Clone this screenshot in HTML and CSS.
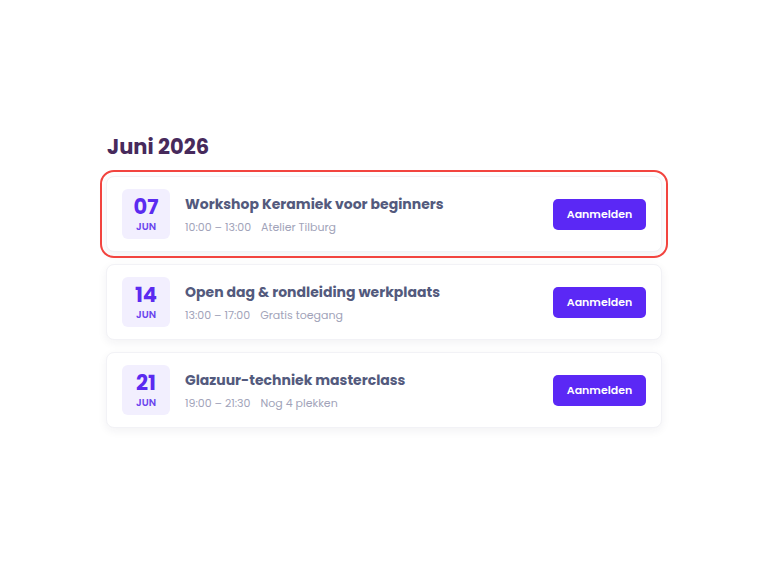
FILE: index.html
```html
<!DOCTYPE html>
<html lang="nl">
<head>
  <meta charset="UTF-8" />
  <meta name="viewport" content="width=device-width, initial-scale=1.0" />
  <title>Agenda juni 2026</title>
  <link rel="stylesheet" href="styles.css">
</head>
<body>

  <div class="agenda">
    <h2 class="month">Juni 2026</h2>

    <div class="event active">
      <div class="date">
        <span class="day">07</span>
        <span class="mon">JUN</span>
      </div>
      <div class="info">
        <div class="title">Workshop Keramiek voor beginners</div>
        <div class="meta"><span>10:00 – 13:00</span><span>Atelier Tilburg</span></div>
      </div>
      <button class="signup">Aanmelden</button>
    </div>

    <div class="event">
      <div class="date">
        <span class="day">14</span>
        <span class="mon">JUN</span>
      </div>
      <div class="info">
        <div class="title">Open dag &amp; rondleiding werkplaats</div>
        <div class="meta"><span>13:00 – 17:00</span><span>Gratis toegang</span></div>
      </div>
      <button class="signup">Aanmelden</button>
    </div>

    <div class="event">
      <div class="date">
        <span class="day">21</span>
        <span class="mon">JUN</span>
      </div>
      <div class="info">
        <div class="title">Glazuur-techniek masterclass</div>
        <div class="meta"><span>19:00 – 21:30</span><span>Nog 4 plekken</span></div>
      </div>
      <button class="signup">Aanmelden</button>
    </div>
  </div>

</body>
</html>
```

FILE: styles.css
```css
body {
  margin: 0;
  background-color: #ffffff;
  font-family: Poppins, Inter, "Noto Sans", sans-serif;
}

.agenda {
  width: 556px;
  margin: 0 auto;
  padding-top: 131px;
}

.month {
  margin: 0 0 13px 1px;
  font-size: 21px;
  line-height: 32px;
  font-weight: 700;
  color: #472a5c;
}

.event {
  display: flex;
  align-items: center;
  gap: 15px;
  padding: 12px 15px 12px 15px;
  margin-bottom: 12px;
  background-color: #ffffff;
  border: 1px solid #f2f2f6;
  border-radius: 8px;
  box-shadow: 0 3px 10px rgba(30, 30, 70, 0.06);
}

.event.active {
  outline: 2px solid #f2443f;
  outline-offset: 4px;
}

.date {
  width: 48px;
  height: 50px;
  flex-shrink: 0;
  display: flex;
  flex-direction: column;
  align-items: center;
  justify-content: center;
  background-color: #f2effe;
  border-radius: 6px;
  color: #5b2bf0;
}

.day {
  font-size: 21px;
  font-weight: 700;
  line-height: 21px;
}

.mon {
  margin-top: 4px;
  font-size: 10px;
  font-weight: 600;
  line-height: 11px;
  color: #6a45ee;
}

.info {
  flex: 1;
}

.title {
  font-size: 14px;
  font-weight: 700;
  line-height: 20px;
  color: #535a7d;
}

.meta {
  margin-top: 5px;
  display: flex;
  gap: 10px;
  font-size: 11px;
  line-height: 16px;
  color: #a1a3b9;
}

.signup {
  width: 93px;
  height: 31px;
  border: none;
  border-radius: 5px;
  background-color: #5b28f5;
  color: #ffffff;
  font-family: inherit;
  font-size: 11px;
  font-weight: 600;
  cursor: pointer;
}

.signup:hover {
  background-color: #4a1ee0;
}
```
